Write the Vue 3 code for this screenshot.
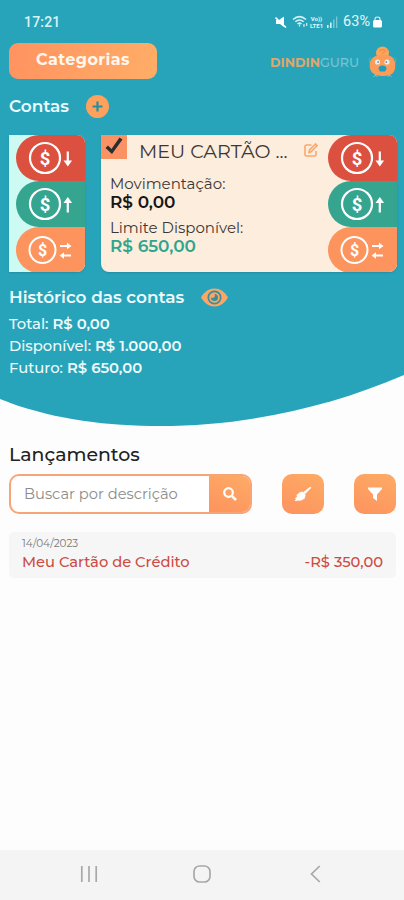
<template>
  <div class="app">
    <section class="hero">
      <div class="status-bar">
        <span class="time">17:21</span>
        <div class="status-icons">
          <svg class="mute" width="12" height="12" viewBox="0 0 12 12">
            <path d="M1 4h3l5-3.500v10.500L5 8H1z" fill="#fff" />
            <path d="M0.500 1.500l10.500 10" stroke="#fff" stroke-width="1.600" />
          </svg>
          <svg class="wifi" width="17" height="13" viewBox="0 0 17 13" fill="none" stroke="#d5f1f4" stroke-width="1.500">
            <path d="M1 4.500Q7.500-1.200 14 4.500M3.300 6.800Q7.500 3.200 11.700 6.800M5.500 9Q7.500 7.300 9.500 9" />
            <path d="M7.500 9.500v2M12 9v3M14.700 8v3" stroke-width="1.200" />
          </svg>
          <span class="volte"><span>Vo))</span><span>LTE1</span></span>
          <svg class="signal" width="11" height="12" viewBox="0 0 11 12">
            <path d="M0 9h1.600v3H0zM3 6.500h1.600V12H3z" fill="#d5f1f4" />
            <path d="M6 3.500h1.500V12H6zM9 0.500h1.300V12H9z" fill="#79c8d5" />
          </svg>
          <span class="battery">63%</span>
          <svg class="lock" width="9" height="12" viewBox="0 0 9 12">
            <path d="M2 5V3.200Q2 1 4.500 1T7 3.200V5" fill="none" stroke="#d5f1f4" stroke-width="1.200" />
            <rect y="4" width="9" height="7.500" rx="1.500" fill="#fff" />
          </svg>
        </div>
      </div>

      <header class="top">
        <button class="btn-categorias">Categorias</button>
        <div class="logo">
          <span class="logo-text"><b>DINDIN</b><span>GURU</span></span>
          <svg width="28" height="34" viewBox="0 0 28 34">
            <path d="M6.500 29v3M4.500 33l2-2 2 2M20.500 29v3M18.500 33l2-2 2 2" stroke="#79c8d5" stroke-width="1" fill="none" />
            <path d="M1.500 13q-2 2-1 6M25.500 13q2 2 1 6" stroke="#5fb3bd" stroke-width="0.800" fill="none" />
            <circle cx="13.500" cy="9" r="6.500" fill="#fda557" />
            <path d="M13.500 10.500q12.800 0 12.800 11T13.500 32 0.700 21.500 13.500 10.500z" fill="#fd9c59" />
            <path d="M10 7q4-3 7 0M13 9.500l3-1.500" stroke="#ec8746" fill="none" />
            <circle cx="8.500" cy="18" r="2.600" fill="#e5eff0" />
            <circle cx="18" cy="18" r="2.600" fill="#e5eff0" />
            <circle cx="9.200" cy="18" r="0.900" fill="#8a8f94" />
            <circle cx="17.300" cy="18" r="0.900" fill="#8a8f94" />
            <path d="M9.500 25q0-3.500 4-3.500t4 3.500l-1.500 2.500h-5z" fill="#1f9db8" />
          </svg>
        </div>
      </header>

      <div class="contas">
        <h2>Contas</h2>
        <button class="btn-add">
          <svg width="23" height="23" viewBox="0 0 23 23">
            <circle cx="11.500" cy="11.500" r="11.500" fill="#fda15c" />
            <path d="M11.500 6.500v10M6.500 11.500h10" stroke="#258fa2" stroke-width="2.200" />
          </svg>
        </button>
      </div>

      <div class="cards">
        <article v-for="card in cards" :key="card.id" class="card" :class="card.type">
          <div v-if="card.name" class="card-body">
            <div class="card-head">
              <span class="check">
                <svg width="26" height="24" viewBox="0 0 26 24">
                  <path d="M4.500 13l2.500-2.500 3.500 3.500L18.500 2.500l3 2L11 19z" fill="#2b2d2e" />
                </svg>
              </span>
              <span class="card-name">{{ card.name }}</span>
              <svg class="edit" width="14" height="14" viewBox="0 0 14 14" fill="none" stroke="#fba76a" stroke-width="1.600">
                <path d="M7.500 2H2.500Q1 2 1 3.500v8Q1 13 2.500 13h8q1.500 0 1.500-1.500V8" />
                <path d="M5 9.500l.5-2.500L11.500 1 13 2.700 7 8.800z" />
              </svg>
            </div>
            <p class="label">Movimentação:</p>
            <p class="value">{{ card.movimentacao }}</p>
            <p class="label limit">Limite Disponível:</p>
            <p class="value green">{{ card.limite }}</p>
          </div>
          <div class="actions">
            <button v-for="action in actions" :key="action" :class="action">
              <svg v-if="action !== 'transfer'" width="69" height="46" viewBox="0 0 69 46">
                <circle cx="29" cy="23" r="15" fill="none" stroke="#fff" stroke-width="2.200" />
                <text x="29" y="29.500" class="cifrao">$</text>
                <path v-if="action === 'out'" d="M51.800 16.500v9.500" stroke="#fff" stroke-width="2.200" />
                <path v-if="action === 'out'" d="M47.500 25.500h8.600l-4.300 6z" fill="#fff" />
                <path v-if="action === 'in'" d="M51.800 21.500v10" stroke="#fff" stroke-width="2.200" />
                <path v-if="action === 'in'" d="M47.500 22h8.600l-4.300-6z" fill="#fff" />
              </svg>
              <svg v-else width="69" height="46" viewBox="0 0 69 46">
                <circle cx="26.500" cy="23" r="13" fill="none" stroke="#fff" stroke-width="2" />
                <text x="26.500" y="28.500" class="cifrao small">$</text>
                <path d="M44 19h8M47 28.500h8" stroke="#fff" stroke-width="1.800" />
                <path d="M51 15.800v6.400l4.500-3.200zM48 25.300v6.400l-4.500-3.200z" fill="#fff" />
              </svg>
            </button>
          </div>
        </article>
      </div>

      <div class="historico">
        <h2>Histórico das contas</h2>
        <svg width="27" height="19" viewBox="0 0 27 19">
          <path d="M0 9.500Q5 0.500 13.500 0.500T27 9.500Q22 18.500 13.500 18.500T0 9.500z" fill="#fda565" />
          <circle cx="13.500" cy="9.500" r="6.200" fill="none" stroke="#388f9c" stroke-width="1.700" />
          <path d="M13.500 6a3.500 3.500 0 1 1-3.500 3.500q2.500 1 3.500-.5t0-3z" fill="#388f9c" />
        </svg>
      </div>
      <p class="resumo">Total: <b>R$ 0,00</b></p>
      <p class="resumo">Disponível: <b>R$ 1.000,00</b></p>
      <p class="resumo">Futuro: <b>R$ 650,00</b></p>
    </section>

    <main class="lancamentos">
      <h3>Lançamentos</h3>
      <div class="toolbar">
        <div class="search">
          <input v-model="busca" type="text" placeholder="Buscar por descrição" />
          <button>
            <svg width="14" height="14" viewBox="0 0 14 14" fill="none" stroke="#fff">
              <circle cx="5.500" cy="5.500" r="4.300" stroke-width="2.200" />
              <path d="M8.800 8.800L13 13" stroke-width="2.600" />
            </svg>
          </button>
        </div>
        <button class="tool">
          <svg width="18" height="16" viewBox="0 0 18 16" fill="#fff">
            <path d="M16.300 0.800l1 1-6.300 6.500-2-2z" />
            <path d="M8.200 5.500l3.500 3.500-1 3.500-3.500 2-6.700.5 1.500-2-1-1 2-1-.5-2 3-2.500z" />
          </svg>
        </button>
        <button class="tool">
          <svg width="14" height="14" viewBox="0 0 14 14">
            <path d="M0 0.500h14v1.500L9 7.500V14l-4-3V7.500L0 2z" fill="#fff" />
          </svg>
        </button>
      </div>

      <div v-for="item in lancamentos" :key="item.id" class="item">
        <span class="item-date">{{ item.data }}</span>
        <div class="item-row">
          <span class="item-name">{{ item.descricao }}</span>
          <span class="item-value">{{ item.valor }}</span>
        </div>
      </div>
    </main>

    <nav class="nav-bar">
      <svg width="18" height="18" viewBox="0 0 18 18" stroke="#a8a8a8" stroke-width="1.700">
        <path d="M1.800 1v16M9 1v16M16.200 1v16" />
      </svg>
      <svg width="18" height="18" viewBox="0 0 18 18" fill="none" stroke="#a8a8a8" stroke-width="1.700">
        <rect x="1" y="1" width="16" height="16" rx="5.500" />
      </svg>
      <svg width="18" height="18" viewBox="0 0 18 18" fill="none" stroke="#a8a8a8" stroke-width="1.700">
        <path d="M13.800 1L5.500 9l8.300 8" />
      </svg>
    </nav>
  </div>
</template>

<script setup>
import { ref } from 'vue'

const busca = ref('')

const actions = ['out', 'in', 'transfer']

const cards = [
  { id: 1, type: 'conta' },
  {
    id: 2,
    type: 'cartao',
    name: 'MEU CARTÃO ...',
    movimentacao: 'R$ 0,00',
    limite: 'R$ 650,00',
  },
]

const lancamentos = [
  { id: 1, data: '14/04/2023', descricao: 'Meu Cartão de Crédito', valor: '-R$ 350,00' },
]
</script>

<style>
body {
  margin: 0;
  background: #fdfdfd;
}
</style>

<style scoped>
.app {
  width: 404px;
  height: 900px;
  display: flex;
  flex-direction: column;
  overflow: hidden;
  font-family: Montserrat, Inter, sans-serif;
  color: #222;
}

h2,
h3,
p {
  margin: 0;
}

button {
  border: none;
  padding: 0;
  background: none;
  font-family: inherit;
  cursor: pointer;
}

svg {
  display: block;
  flex: none;
}

span,
p,
h2,
h3 {
  white-space: nowrap;
}

.hero {
  box-sizing: border-box;
  height: 427px;
  flex: none;
  padding: 0 7px 0 9px;
  background: #28a4ba;
  color: #eefbfc;
  clip-path: path('M0 0H404V375C330 407 245 426 160 426C105 426 50 419 0 399Z');
}

.status-bar {
  display: flex;
  justify-content: space-between;
  align-items: center;
  height: 43px;
  padding: 0 15px;
}

.time {
  font-family: Roboto, sans-serif;
  font-size: 14px;
  font-weight: 500;
  letter-spacing: 0.2px;
  color: #d9f3f6;
}

.status-icons {
  display: flex;
  align-items: center;
  color: #e3f6f8;
}

.wifi {
  margin-left: 5px;
}

.volte {
  display: flex;
  flex-direction: column;
  margin-left: 1px;
  font-family: Roboto, sans-serif;
  font-size: 6px;
  line-height: 7px;
  font-weight: 700;
  text-align: center;
}

.signal {
  margin-left: 4px;
}

.battery {
  margin-left: 5px;
  font-family: Roboto, sans-serif;
  font-size: 14.5px;
}

.lock {
  margin-left: 3px;
}

.top {
  display: flex;
  justify-content: space-between;
  height: 36px;
}

.btn-categorias {
  width: 148px;
  height: 36px;
  padding-bottom: 4px;
  border-radius: 9px;
  background: linear-gradient(100deg, #ff9360, #ffad67);
  color: #fff7ec;
  font-size: 16px;
  font-weight: 700;
  letter-spacing: 0.4px;
}

.logo {
  display: flex;
  align-items: center;
  gap: 10px;
}

.logo-text {
  padding-top: 2px;
  font-size: 12.7px;
  font-weight: 500;
  color: #79c5d2;
}

.logo-text b {
  font-weight: 700;
  color: #dfa76c;
}

.contas {
  display: flex;
  align-items: center;
  gap: 17px;
  height: 24px;
  margin-top: 15px;
}

h2 {
  padding-bottom: 1px;
  font-size: 16.9px;
  line-height: 22px;
  font-weight: 600;
}

.cards {
  display: flex;
  gap: 16px;
  margin-top: 17px;
}

.card {
  display: flex;
  justify-content: flex-end;
  height: 137px;
  overflow: hidden;
  border-radius: 0 8px 8px 0;
  box-shadow: 0 1px 2px rgba(0, 60, 80, 0.2);
}

.conta {
  width: 76px;
  background: #cdfaf3;
}

.cartao {
  flex: 1;
  border-radius: 0 8px 8px 8px;
  background: #fceddd;
}

.card-body {
  flex: 1;
  color: #3b3735;
}

.card-head {
  display: flex;
  align-items: flex-start;
  height: 39px;
}

.check {
  width: 26px;
  height: 24px;
  background: #fb9263;
}

.card-name {
  width: 165px;
  margin-left: 12px;
  font-size: 19.1px;
  line-height: 34px;
}

.edit {
  margin-top: 8px;
}

.label {
  padding-left: 9px;
  font-size: 15px;
  line-height: 19px;
}

.value {
  padding-left: 9px;
  font-size: 16.9px;
  line-height: 18px;
  font-weight: 600;
  color: #161616;
}

.limit {
  margin-top: 7px;
}

.value.green {
  color: #2fa58d;
}

.actions {
  display: flex;
  flex-direction: column;
  width: 69px;
}

.actions button {
  height: 46px;
  border-radius: 23px 0 0 23px;
}

.out {
  background: #dc503f;
}

.in {
  background: #35a590;
}

.transfer {
  background: #fd945e;
}

.cifrao {
  fill: #fff;
  font-family: Roboto, sans-serif;
  font-size: 18.5px;
  font-weight: 700;
  text-anchor: middle;
}

.cifrao.small {
  font-size: 16px;
}

.historico {
  display: flex;
  align-items: center;
  gap: 17px;
  height: 22px;
  margin: 14px 0 5px;
}

.resumo {
  font-size: 14.8px;
  line-height: 22px;
  font-weight: 500;
}

.resumo b {
  font-weight: 600;
}

.lancamentos {
  flex: 1;
  padding: 16px 8px 0 9px;
}

h3 {
  font-size: 18.9px;
  line-height: 24px;
  font-weight: 500;
}

.toolbar {
  display: flex;
  height: 40px;
  margin-top: 7px;
}

.search {
  box-sizing: border-box;
  display: flex;
  width: 243px;
  overflow: hidden;
  border: 2px solid #f7a577;
  border-radius: 10px;
  background: #fff;
}

.search input {
  box-sizing: border-box;
  width: 198px;
  padding: 0 0 1px 13px;
  border: none;
  outline: none;
  background: transparent;
  font-family: inherit;
  font-size: 14.7px;
}

.search input::placeholder {
  color: #8c8c8c;
}

.search button,
.tool {
  display: flex;
  align-items: center;
  justify-content: center;
  background: linear-gradient(20deg, #fd935e, #fdab66);
}

.search button {
  flex: 1;
}

.tool {
  width: 42px;
  margin-left: 30px;
  border-radius: 10px;
}

.item {
  box-sizing: border-box;
  height: 46px;
  margin-top: 18px;
  padding: 4px 13px 0;
  border-radius: 5px;
  background: #f6f6f6;
}

.item-date {
  display: block;
  font-size: 10.4px;
  line-height: 15px;
  color: #777;
}

.item-row {
  display: flex;
  justify-content: space-between;
  font-size: 14.7px;
  line-height: 22px;
  font-weight: 500;
  color: #cc4b43;
}

.nav-bar {
  display: flex;
  justify-content: space-between;
  box-sizing: border-box;
  height: 50px;
  padding: 15px 80px 0;
  background: #f4f4f4;
}
</style>
